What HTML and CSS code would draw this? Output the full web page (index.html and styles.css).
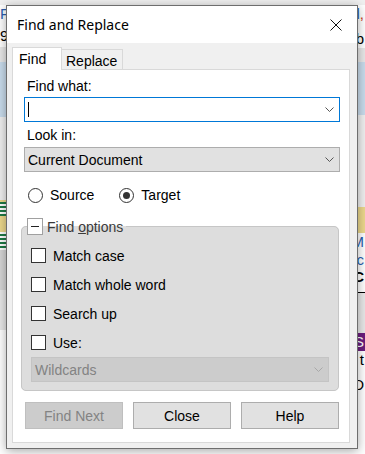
FILE: index.html
```html
<!DOCTYPE html>
<html lang="en">
<head>
    <meta charset="UTF-8">
    <meta name="viewport" content="width=device-width, initial-scale=1.0">
    <title>Find and Replace</title>
    <link rel="stylesheet" href="styles.css">
</head>
<body>
    <div class="app">
        <div class="strip left">
            <div class="gray"></div>
            <div class="white frag blue">F</div>
            <div class="white frag">9</div>
            <div class="light"></div>
            <div class="sel"></div>
            <div class="gray"></div>
            <div class="yellow"><span class="sheet"></span></div>
            <div class="white"><span class="sheet"></span></div>
            <div class="mid"></div>
            <div class="light"></div>
            <div class="white"></div>
        </div>
        <div class="strip right">
            <div class="gray"></div>
            <div class="white frag blue">Normal<span class="red">,</span></div>
            <div class="white frag">Tab</div>
            <div class="light"></div>
            <div class="sel"></div>
            <div class="gray"></div>
            <div class="yellow"></div>
            <div class="white frag blue">M</div>
            <div class="white frag blue">.c</div>
            <div class="white frag bold">C</div>
            <div class="light"></div>
            <div class="purple frag">TS</div>
            <div class="white frag">t</div>
            <div class="white frag">D</div>
            <div class="white"></div>
        </div>
    </div>

    <div class="dialog">
        <div class="titlebar">
            <span class="title">Find and Replace</span>
            <svg class="close" width="12" height="12" viewBox="0 0 12 12">
                <path d="M0.5 0.5L11.5 11.5M11.5 0.5L0.5 11.5" stroke="#111" stroke-width="1" fill="none"/>
            </svg>
        </div>
        <div class="client">
            <div class="tabs">
                <div class="tab active">Find</div>
                <div class="tab">Replace</div>
            </div>
            <div class="panel">
                <div class="lbl">Find what:</div>
                <div class="combo edit">
                    <span class="caret"></span>
                    <svg class="chev" width="9" height="5" viewBox="0 0 9 5"><path d="M0.5 0.5L4.5 4.5L8.5 0.5" stroke="#555" fill="none"/></svg>
                </div>
                <div class="lbl second">Look in:</div>
                <div class="combo list">
                    <span>Current Document</span>
                    <svg class="chev" width="9" height="5" viewBox="0 0 9 5"><path d="M0.5 0.5L4.5 4.5L8.5 0.5" stroke="#555" fill="none"/></svg>
                </div>
                <div class="radios">
                    <span class="radio"><i class="circle"></i>Source</span>
                    <span class="radio on"><i class="circle"></i>Target</span>
                </div>
                <fieldset class="group">
                    <legend><span class="toggle"></span><span>Find <u>o</u>ptions</span></legend>
                    <div class="checks">
                        <div class="check"><i class="box"></i>Match case</div>
                        <div class="check"><i class="box"></i>Match whole word</div>
                        <div class="check"><i class="box"></i>Search up</div>
                        <div class="check"><i class="box"></i>Use:</div>
                    </div>
                    <div class="combo disabled">
                        <span>Wildcards</span>
                        <svg class="chev" width="9" height="5" viewBox="0 0 9 5"><path d="M0.5 0.5L4.5 4.5L8.5 0.5" stroke="#a8a8a8" fill="none"/></svg>
                    </div>
                </fieldset>
                <div class="buttons">
                    <button class="btn" disabled>Find Next</button>
                    <button class="btn">Close</button>
                    <button class="btn">Help</button>
                </div>
            </div>
        </div>
    </div>
</body>
</html>
```

FILE: styles.css
```css
body {
    margin: 0;
    width: 365px;
    height: 454px;
    overflow: hidden;
    position: relative;
    font-family: "Liberation Sans", Arial, sans-serif;
    font-size: 14px;
    color: #000;
    background-color: #fff;
}

/* application behind the dialog */
.app {
    display: grid;
    grid-template-columns: 1fr 1fr;
    height: 454px;
}

.strip {
    display: grid;
}

.strip.left {
    grid-template-rows: 5px 22px 20px 15px 55px 83px 32px 18px 40px 40px 1fr;
}

.strip.right {
    grid-template-rows: 5px 25px 18px 14px 53px 92px 26px 18px 17px 25px 40px 18px 25px 25px 1fr;
}

.gray { background-color: #f0f0f0; }
.white { background-color: #fff; }
.light { background-color: #e8e8e8; }
.mid { background-color: #d6d6d6; }
.sel { background-color: #c9dcec; }
.yellow { background-color: #ecd88c; }
.purple { background-color: #6c1d7e; color: #fff; }

.frag {
    font-size: 15px;
    line-height: 18px;
    white-space: nowrap;
}

.right .frag {
    text-align: right;
    padding-right: 1px;
}

.blue { color: #2a5fb0; }
.red { color: #d03a1a; }
.bold { font-weight: bold; border-bottom: 1px solid #000; }

.sheet {
    display: block;
    width: 6px;
    height: 14px;
    margin-top: 2px;
    background: repeating-linear-gradient(#1e7a45 0 2px, #ffffff 2px 4px);
}

/* dialog */
.dialog {
    position: absolute;
    left: 6px;
    top: 5px;
    width: 352px;
    height: 444px;
    box-sizing: border-box;
    border: 1px solid #6e6e6e;
    box-shadow: 0 2px 10px rgba(0, 0, 0, 0.35);
    background-color: #f0f0f0;
    display: flex;
    flex-direction: column;
}

.titlebar {
    height: 37px;
    flex: none;
    background-color: #fff;
    display: flex;
    align-items: center;
    justify-content: space-between;
    padding: 0 15px 0 10px;
}

.title {
    font-family: "Noto Sans", sans-serif;
    font-size: 14px;
    padding-bottom: 1px;
}

.close {
    display: block;
    margin-top: 1px;
}

.client {
    flex: 1;
    display: flex;
    flex-direction: column;
    padding: 4px 7px 5px 5px;
}

.tabs {
    display: flex;
    align-items: flex-end;
    margin-bottom: -1px;
    position: relative;
    z-index: 1;
}

.tab {
    box-sizing: border-box;
    border: 1px solid #d9d9d9;
    line-height: 16px;
    padding-top: 3px;
}

.tab.active {
    width: 50px;
    height: 23px;
    padding-left: 6px;
    background-color: #fff;
    border-bottom: none;
}

.tab:not(.active) {
    width: 61px;
    height: 21px;
    padding-left: 4px;
    border-left: none;
}

.panel {
    flex: 1;
    background-color: #fff;
    border: 1px solid #d9d9d9;
    padding: 8px 10px 0 8px;
}

.lbl {
    line-height: 16px;
    margin-left: 6px;
    margin-bottom: 3px;
}

.lbl.second {
    margin-top: 5px;
    margin-bottom: 4px;
}

.combo {
    height: 25px;
    box-sizing: border-box;
    display: flex;
    align-items: center;
    justify-content: space-between;
    padding: 0 5px 0 3px;
    border: 1px solid #adadad;
    margin: 0 -1px 0 3px;
}

.combo.edit {
    border-color: #0078d7;
}

.combo.list {
    background-color: #e1e1e1;
}

.combo.disabled {
    margin: 7px 0 0 0;
    background-color: #cccccc;
    border-color: #c4c4c4;
    color: #838383;
}

.caret {
    width: 1px;
    height: 15px;
    background-color: #000;
}

.chev {
    display: block;
}

.radios {
    display: flex;
    gap: 25px;
    margin: 16px 0 0 7px;
    line-height: 15px;
}

.radio {
    display: flex;
    align-items: center;
    gap: 7px;
}

.circle {
    width: 15px;
    height: 15px;
    box-sizing: border-box;
    border: 1px solid #333;
    border-radius: 50%;
    display: flex;
    align-items: center;
    justify-content: center;
}

.radio.on .circle::after {
    content: "";
    width: 7px;
    height: 7px;
    border-radius: 50%;
    background-color: #333;
}

.group {
    margin: 15px 0 0 0;
    padding: 0 9px 8px 9px;
    border: 1px solid #c6c6c6;
    border-radius: 5px;
    background-color: #dddddd;
    min-width: 0;
}

.group legend {
    display: flex;
    align-items: center;
    gap: 4px;
    padding: 0 3px 0 0;
    margin-left: -4px;
    color: #3a3a3a;
    line-height: 16px;
}

.toggle {
    width: 16px;
    height: 17px;
    box-sizing: border-box;
    border: 1px solid #a0a0a0;
    background-color: #fff;
    display: flex;
    align-items: center;
    justify-content: center;
}

.toggle::after {
    content: "";
    width: 8px;
    height: 1px;
    background-color: #222;
}

.checks {
    display: flex;
    flex-direction: column;
    gap: 14px;
    margin-top: 13px;
}

.check {
    display: flex;
    align-items: center;
    gap: 7px;
    height: 15px;
}

.box {
    width: 15px;
    height: 15px;
    box-sizing: border-box;
    border: 1px solid #333;
    background-color: #fff;
}

.buttons {
    display: flex;
    gap: 10px;
    margin: 11px 0 0 4px;
}

.btn {
    width: 98px;
    height: 27px;
    font-family: "Liberation Sans", Arial, sans-serif;
    font-size: 14px;
    color: #000;
    background-color: #e1e1e1;
    border: 1px solid #adadad;
    padding: 0;
}

.btn:disabled {
    background-color: #cccccc;
    border-color: #bfbfbf;
    color: #838383;
}
```
